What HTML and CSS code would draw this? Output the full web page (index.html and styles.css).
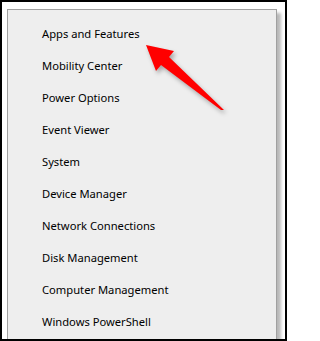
FILE: index.html
```html
<!DOCTYPE html>
<html>
<head>
<meta charset="utf-8">
<link rel="stylesheet" href="styles.css">
</head>
<body>
<div class="frame">
  <div class="menu">
    <ul class="items">
      <li>Apps and Features</li>
      <li>Mobility Center</li>
      <li>Power Options</li>
      <li>Event Viewer</li>
      <li>System</li>
      <li>Device Manager</li>
      <li>Network Connections</li>
      <li>Disk Management</li>
      <li>Computer Management</li>
      <li>Windows PowerShell</li>
    </ul>
  </div>
  <svg class="arrow" width="287" height="341" viewBox="0 0 287 341">
    <polygon points="146,45 174,51 169,57 224,110 221,110 161,65 156,71" fill="#ff0000"/>
  </svg>
</div>
</body>
</html>
```
FILE: styles.css
```css
html, body {
  margin: 0;
  padding: 0;
  background: #fff;
}
.frame {
  position: relative;
  width: 287px;
  height: 341px;
  box-sizing: border-box;
  border: 2px solid #000;
  padding: 7px 0 0 5px;
  overflow: hidden;
  background: #fff;
}
.menu {
  width: 270px;
  height: 360px;
  box-sizing: border-box;
  border: 1px solid #a0a0a0;
  background: #eeeeee;
  box-shadow: 4px 4px 3px rgba(0, 0, 0, 0.28);
}
.items {
  list-style: none;
  margin: 0;
  padding: 8px 0 0 34px;
  font-family: "Noto Sans", "Open Sans", sans-serif;
  font-size: 11.2px;
  line-height: 32px;
  color: #000;
}
.arrow {
  position: absolute;
  left: -2px;
  top: -2px;
  filter: drop-shadow(2px 3px 2px rgba(0, 0, 0, 0.3));
}
```
